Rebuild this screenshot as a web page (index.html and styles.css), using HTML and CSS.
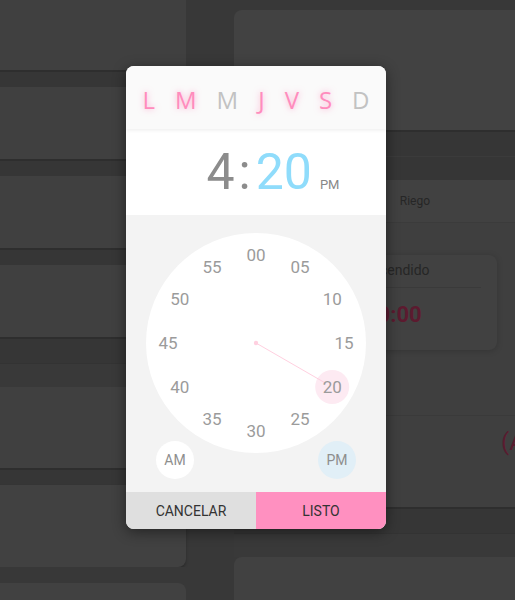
FILE: index.html
```html
<!doctype html>
<html lang="es">
<head>
    <meta charset="UTF-8">
    <title>Programar riego</title>
    <meta name="viewport" content="width=device-width,initial-scale=1.0">
    <link rel="stylesheet" href="styles.css">
</head>
<body>
<div class="page">
    <div class="col col-left">
        <div class="blk blk-first"></div>
        <div class="sp"></div>
        <div class="blk blk-row"></div>
        <div class="sp"></div>
        <div class="blk blk-row"></div>
        <div class="sp"></div>
        <div class="blk blk-row"></div>
        <div class="sp sp-tall"></div>
        <div class="sp sp-tall sp-light"></div>
        <div class="blk blk-big"></div>
        <div class="sp"></div>
        <div class="card card-bottom"></div>
        <div class="sp sp-small"></div>
        <div class="card card-next"></div>
    </div>

    <div class="col col-right">
        <div class="top-space"></div>
        <div class="blk blk-head"></div>
        <div class="sp sp-tall"></div>
        <div class="sp sp-tall sp-dark"></div>
        <div class="panel">
            <div class="tabs">
                <span>Riego</span>
            </div>
            <div class="info">
                <div class="info-label">Tiempo encendido</div>
                <div class="info-value">00:00</div>
            </div>
            <div class="state">
                <span>(A</span>
            </div>
        </div>
        <div class="sp sp-tall"></div>
        <div class="sp sp-tall sp-light"></div>
        <div class="card card-right"></div>
    </div>
</div>

<div class="picker">
    <div class="days">
        <span class="on">L</span>
        <span class="on">M</span>
        <span>M</span>
        <span class="on">J</span>
        <span class="on">V</span>
        <span class="on">S</span>
        <span>D</span>
    </div>
    <div class="time">
        <div class="time-inner">
            <span class="hour">4</span>
            <span class="colon">:</span>
            <span class="min">20</span>
            <span class="ampm">PM</span>
        </div>
    </div>
    <div class="dial">
        <div class="face">
            <svg class="hand" viewBox="0 0 220 220" width="220" height="220">
                <circle cx="186.2" cy="154" r="17" fill="#fdeaf2"/>
                <line x1="110" y1="110" x2="180" y2="150.4" stroke="#ffd0e0" stroke-width="1"/>
                <circle cx="110" cy="110" r="2.2" fill="#ffd0e0"/>
            </svg>
            <span class="num" style="left:110px;top:22px">00</span>
            <span class="num" style="left:154px;top:33.8px">05</span>
            <span class="num" style="left:186.2px;top:66px">10</span>
            <span class="num" style="left:198px;top:110px">15</span>
            <span class="num" style="left:186.2px;top:154px">20</span>
            <span class="num" style="left:154px;top:186.2px">25</span>
            <span class="num" style="left:110px;top:198px">30</span>
            <span class="num" style="left:66px;top:186.2px">35</span>
            <span class="num" style="left:33.8px;top:154px">40</span>
            <span class="num" style="left:22px;top:110px">45</span>
            <span class="num" style="left:33.8px;top:66px">50</span>
            <span class="num" style="left:66px;top:33.8px">55</span>
        </div>
        <div class="meridiem">
            <span class="mer">AM</span>
            <span class="mer sel">PM</span>
        </div>
    </div>
    <div class="actions">
        <span class="btn btn-cancel">CANCELAR</span>
        <span class="btn btn-ok">LISTO</span>
    </div>
</div>
</body>
</html>
```

FILE: styles.css
```css
* {
    margin: 0;
    padding: 0;
    box-sizing: border-box;
}

html, body {
    height: 100%;
    overflow: hidden;
}

body {
    position: relative;
    background: #383838;
    font-family: Roboto, "Liberation Sans", sans-serif;
}

/* dimmed page behind the dialog */

.page {
    display: flex;
    gap: 48px;
    height: 600px;
}

.col {
    display: flex;
    flex-direction: column;
}

.col-left {
    width: 186px;
    flex-shrink: 0;
}

.col-right {
    width: 281px;
    flex-shrink: 0;
}

.blk {
    flex-shrink: 0;
    background: #404040;
    border-bottom: 2px solid #2e2e2e;
}

.blk-first {
    height: 72px;
    border-bottom-right-radius: 6px;
}

.blk-row {
    height: 74px;
}

.blk-big {
    height: 83px;
}

.blk-head {
    height: 122px;
    border-top-left-radius: 8px;
    background: #424242;
}

.sp {
    flex-shrink: 0;
    height: 15px;
    background: #363636;
}

.sp-tall {
    height: 24px;
}

.sp-light {
    background: #393939;
    border-top: 1px solid #333;
}

.sp-dark {
    background: #363636;
    border-top: 1px solid #3b3b3b;
}

.sp-small {
    height: 16px;
    background: #383838;
}

.card {
    flex-shrink: 0;
    background: #414141;
}

.card-bottom {
    height: 82px;
    border-radius: 0 0 8px 0;
    box-shadow: 0 2px 3px rgba(0, 0, 0, .25);
}

.card-next {
    height: 40px;
    border-radius: 0 8px 0 0;
}

.card-right {
    height: 60px;
    border-radius: 8px 0 0 0;
}

.top-space {
    height: 10px;
    flex-shrink: 0;
}

.panel {
    height: 329px;
    flex-shrink: 0;
    background: #3f3f3f;
    border-bottom: 2px solid #2e2e2e;
}

.tabs {
    display: flex;
    justify-content: flex-end;
    height: 43px;
    padding-right: 85px;
    align-items: center;
    font-size: 12px;
    color: #262626;
    background: #414141;
    border-bottom: 1px solid #3b3b3b;
}

.info {
    width: 191px;
    height: 95px;
    margin: 32px 0 0 72px;
    padding: 5px 0 0 8px;
    background: #414141;
    border-radius: 8px;
    box-shadow: 0 1px 6px rgba(0, 0, 0, .18);
}

.info-label {
    font-size: 14px;
    color: #262626;
    height: 28px;
    line-height: 20px;
    margin-right: 16px;
    border-bottom: 1px solid #3a3a3a;
}

.info-value {
    padding: 14px 0 0 51px;
    font-size: 22px;
    font-weight: bold;
    color: #5c1a2f;
}

.state {
    margin-top: 65px;
    height: 93px;
    border-top: 1px solid #3a3a3a;
    padding: 12px 0 0 267px;
    font-size: 24px;
    color: #5a1b2f;
    white-space: nowrap;
}

/* time picker dialog */

.picker {
    position: absolute;
    left: 126px;
    top: 66px;
    width: 260px;
    border-radius: 8px;
    overflow: hidden;
    background: #fff;
    box-shadow: 0 3px 14px rgba(0, 0, 0, .45);
}

.days {
    position: relative;
    z-index: 1;
    height: 63px;
    padding-top: 3px;
    display: flex;
    justify-content: center;
    align-items: center;
    gap: 20px;
    background: #fafafa;
    box-shadow: 0 1px 4px rgba(0, 0, 0, .08);
    font-family: "Open Sans", sans-serif;
    font-size: 24px;
    color: #c2c2c2;
}

.days .on {
    color: #ff8cbd;
    text-shadow: 0 0 6px rgba(255, 120, 180, .65);
}

.time {
    height: 86px;
    display: flex;
    align-items: center;
    justify-content: center;
    padding-left: 34px;
}

.time-inner {
    display: flex;
    align-items: baseline;
}

.hour, .colon, .min {
    font-size: 50px;
}

.hour, .colon {
    color: #8c8c8c;
}

.colon {
    margin: 0 5px 0 4px;
}

.min {
    color: #8fdcfb;
}

.ampm {
    font-size: 13px;
    color: #888;
    margin-left: 8px;
}

.dial {
    height: 277px;
    padding-top: 18px;
    background: #f3f3f3;
}

.face {
    position: relative;
    width: 220px;
    height: 220px;
    margin: 0 auto;
    border-radius: 50%;
    background: #fff;
}

.hand {
    position: absolute;
    left: 0;
    top: 0;
}

.num {
    position: absolute;
    transform: translate(-50%, -50%);
    font-size: 17px;
    line-height: 1;
    color: #9b9b9b;
}

.meridiem {
    display: flex;
    justify-content: space-between;
    padding: 0 30px;
    margin-top: -12px;
}

.mer {
    width: 38px;
    height: 38px;
    border-radius: 50%;
    display: flex;
    align-items: center;
    justify-content: center;
    font-size: 14px;
    color: #8e8e8e;
    background: #fff;
}

.mer.sel {
    background: #e1eff7;
}

.actions {
    display: flex;
}

.btn {
    flex: 1;
    height: 37px;
    display: flex;
    align-items: center;
    justify-content: center;
    font-size: 14px;
    color: #333;
}

.btn-cancel {
    background: #dfdfdf;
}

.btn-ok {
    background: #ff90c0;
}
```
